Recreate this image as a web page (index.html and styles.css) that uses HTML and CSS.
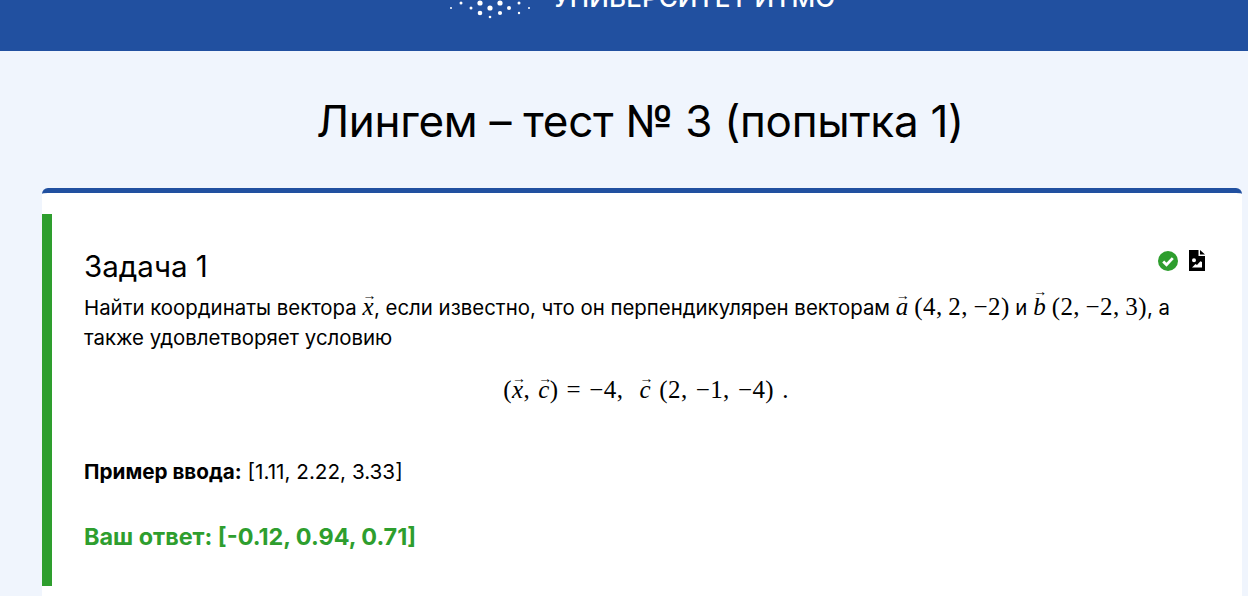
FILE: index.html
```html
<!DOCTYPE html>
<html lang="ru">
<head>
  <meta charset="UTF-8">
  <title>Лингем – тест № 3 (попытка 1)</title>
  <link rel="stylesheet" href="styles.css">
</head>
<body>
  <header class="top-bar">
    <div class="brand">
      <svg class="brand-logo" width="82" height="20" viewBox="0 0 82 20" fill="#fff">
        <circle cx="2" cy="9" r="1"/>
        <circle cx="12" cy="4" r="1.5"/>
        <circle cx="22" cy="9" r="1.5"/>
        <circle cx="31" cy="4" r="2.6"/>
        <circle cx="31" cy="14" r="2.3"/>
        <circle cx="41" cy="9" r="2.6"/>
        <circle cx="41" cy="18" r="1.3"/>
        <circle cx="51" cy="4" r="2.6"/>
        <circle cx="51" cy="14" r="2.1"/>
        <circle cx="60" cy="9" r="2"/>
        <circle cx="70" cy="4" r="1.5"/>
        <circle cx="70" cy="14" r="1.2"/>
        <circle cx="80" cy="9" r="1"/>
      </svg>
      <span class="brand-name">УНИВЕРСИТЕТ ИТМО</span>
    </div>
  </header>

  <h1 class="page-title">Лингем – тест № 3 (попытка 1)</h1>

  <main class="card">
    <section class="task">
      <div class="task-head">
        <h2 class="task-title">Задача 1</h2>
        <div class="task-icons">
          <svg width="20" height="20" viewBox="0 0 20 20">
            <circle cx="10" cy="10" r="10" fill="#2e9e2e"/>
            <path d="M5.2 10.4l3.3 3.3 6.3-6.6" fill="none" stroke="#fff" stroke-width="2.8"/>
          </svg>
          <svg width="16" height="21" viewBox="0 0 16 21">
            <path fill-rule="evenodd" d="M0 0h9.500v6H16v15H0zM11 0l5 4.600h-5zM5 8.200a2 2 0 1 0 0 4 2 2 0 0 0 0-4zM3 17.500h10v-5.400l-1.600-.9-3.400 3.800-1.500-1.100z"/>
          </svg>
        </div>
      </div>
      <p class="task-text">Найти координаты вектора <span class="math"><i class="vec">x</i></span>, если известно, что он перпендикулярен векторам <span class="math"><i class="vec">a</i> (4, 2, −2)</span> и <span class="math"><i class="vec vec-tall">b</i> (2, −2, 3)</span>, а также удовлетворяет условию</p>
      <p class="formula math">(<i class="vec">x</i>, <i class="vec">c</i>) = −4, &nbsp;<i class="vec">c</i> (2, −1, −4) .</p>
      <p class="sample"><b>Пример ввода:</b> [1.11, 2.22, 3.33]</p>
      <p class="answer">Ваш ответ: [-0.12, 0.94, 0.71]</p>
    </section>
  </main>
</body>
</html>
```

FILE: styles.css
```css
html {
  height: 596px;
  overflow: hidden;
}

body {
  margin: 0;
  background: #f0f5fd;
  color: #000;
  font-family: 'Inter', 'Noto Sans', sans-serif;
}

.top-bar {
  height: 51px;
  padding-left: 36px;
  background: #2150a0;
  display: flex;
  flex-direction: column;
  justify-content: flex-end;
  align-items: center;
  overflow: hidden;
}

.brand {
  display: flex;
  align-items: flex-end;
  gap: 22px;
  flex-shrink: 0;
  padding-bottom: 40px;
}

.brand-logo {
  margin-bottom: -8px;
  flex-shrink: 0;
}

.brand-name {
  color: #fff;
  font-size: 26px;
  font-weight: 500;
  line-height: 26px;
  letter-spacing: 0.1px;
  white-space: nowrap;
}

.page-title {
  margin: 0;
  padding: 40px 0 36px 32px;
  height: 61px;
  font-size: 44px;
  font-weight: 400;
  line-height: 61px;
  letter-spacing: -0.28px;
  text-align: center;
}

.card {
  margin: 0 6px 0 42px;
  padding: 21px 0 10px;
  background: #fff;
  border-top: 5px solid #2150a0;
  border-radius: 6px 6px 0 0;
}

.task {
  height: 372px;
  box-sizing: border-box;
  padding: 35px 37px 0 32px;
  border-left: 10px solid #2e9e2e;
}

.task-head {
  display: flex;
  justify-content: space-between;
  align-items: flex-start;
}

.task-title {
  margin: 0;
  font-size: 29.5px;
  font-weight: 400;
  line-height: 34px;
}

.task-icons {
  display: flex;
  gap: 11px;
  align-items: center;
  margin-top: 1px;
}

.task-text {
  margin: 9px 0 0;
  font-size: 20.4px;
  line-height: 30px;
}

.math {
  font-family: 'Liberation Serif', serif;
  font-size: 25px;
  letter-spacing: 0.4px;
  word-spacing: -1px;
}

.vec {
  position: relative;
  display: inline-block;
}

.vec::before {
  content: "→";
  position: absolute;
  top: -11px;
  left: 0;
  width: 100%;
  text-align: center;
  font-size: 14px;
  font-style: normal;
}

.vec-tall::before {
  top: -15px;
}

.formula {
  margin: 22px 0 0;
  padding-left: 3px;
  line-height: 30px;
  word-spacing: 1.5px;
  text-align: center;
}

.sample {
  margin: 52px 0 0;
  font-size: 20.7px;
  line-height: 30px;
}

.answer {
  margin: 35px 0 0;
  color: #2e9e2e;
  font-size: 23.4px;
  font-weight: 700;
  line-height: 30px;
}
```
